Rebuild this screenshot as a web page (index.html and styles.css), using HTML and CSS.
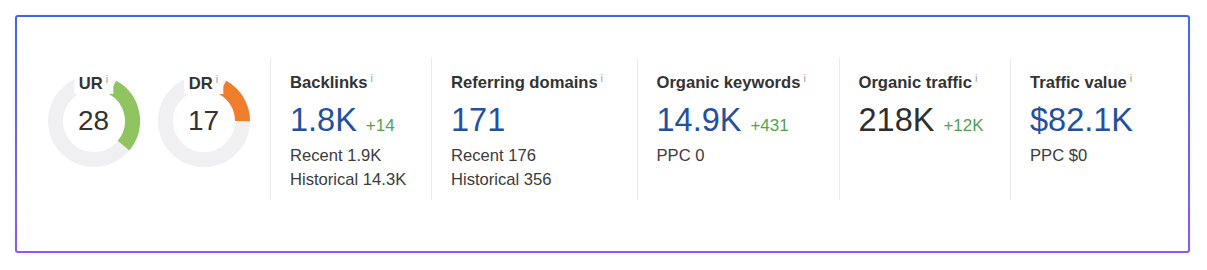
FILE: index.html
```html
<!DOCTYPE html>
<html lang="en">
<head>
<meta charset="utf-8">
<title>Overview</title>
<link rel="stylesheet" href="styles.css">
</head>
<body>
<div class="page">
  <div class="card">
    <div class="row">
      <div class="gauges">
        <div class="gauge">
          <svg class="ring" width="92" height="92" viewBox="0 0 92 92">
            <circle class="track" cx="46" cy="46" r="38.5"></circle>
            <path class="arc arc-ur" d="M64.67 12.33 A38.5 38.5 0 0 1 75.58 70.64"></path>
          </svg>
          <div class="gauge-label">UR<span class="info">i</span></div>
          <div class="gauge-value">28</div>
        </div>
        <div class="gauge">
          <svg class="ring" width="92" height="92" viewBox="0 0 92 92">
            <circle class="track" cx="46" cy="46" r="38.5"></circle>
            <path class="arc arc-dr" d="M64.67 12.33 A38.5 38.5 0 0 1 84.5 46.13"></path>
          </svg>
          <div class="gauge-label">DR<span class="info">i</span></div>
          <div class="gauge-value">17</div>
        </div>
      </div>

      <div class="metric">
        <div class="metric-label">Backlinks<span class="info">i</span></div>
        <div class="metric-main"><span class="big blue">1.8K</span><span class="delta">+14</span></div>
        <div class="metric-sub">
          <div>Recent 1.9K</div>
          <div>Historical 14.3K</div>
        </div>
      </div>

      <div class="metric">
        <div class="metric-label">Referring domains<span class="info">i</span></div>
        <div class="metric-main"><span class="big blue">171</span></div>
        <div class="metric-sub">
          <div>Recent 176</div>
          <div>Historical 356</div>
        </div>
      </div>

      <div class="metric">
        <div class="metric-label">Organic keywords<span class="info">i</span></div>
        <div class="metric-main"><span class="big blue">14.9K</span><span class="delta">+431</span></div>
        <div class="metric-sub">
          <div>PPC 0</div>
        </div>
      </div>

      <div class="metric">
        <div class="metric-label">Organic traffic<span class="info">i</span></div>
        <div class="metric-main"><span class="big dark">218K</span><span class="delta">+12K</span></div>
      </div>

      <div class="metric">
        <div class="metric-label">Traffic value<span class="info">i</span></div>
        <div class="metric-main"><span class="big blue">$82.1K</span></div>
        <div class="metric-sub">
          <div>PPC $0</div>
        </div>
      </div>
    </div>
  </div>
</div>
</body>
</html>
```

FILE: styles.css
```css
* {
  box-sizing: border-box;
}

html, body {
  margin: 0;
  padding: 0;
  background: #ffffff;
}

body {
  font-family: "Liberation Sans", Arial, sans-serif;
  color: #333333;
}

.page {
  padding: 15px 17px 17px 15px;
}

.card {
  width: 1175px;
  height: 238px;
  border: 2px solid transparent;
  border-radius: 3px;
  background:
    linear-gradient(#ffffff, #ffffff) padding-box,
    linear-gradient(180deg, #3f68e6 0%, #6a63e8 50%, #8a5ce8 100%) border-box;
  box-shadow: 0 0 5px rgba(0, 0, 0, 0.07);
  padding-top: 41px;
}

.row {
  display: grid;
  grid-template-columns: 253px 161px 205.5px 202px 171.5px 1fr;
  height: 142px;
}

.gauges {
  display: flex;
  gap: 18px;
  padding-left: 30.5px;
  padding-top: 17px;
}

.gauge {
  position: relative;
  width: 92px;
  height: 92px;
}

.ring {
  display: block;
}

.track {
  fill: none;
  stroke: #f0f0f3;
  stroke-width: 15;
}

.arc {
  fill: none;
  stroke-width: 15;
  stroke-linecap: butt;
}

.arc-ur {
  stroke: #8fc45f;
}

.arc-dr {
  stroke: #ef7d2b;
}

.gauge-label {
  position: absolute;
  top: -1.5px;
  left: 50%;
  transform: translateX(-50%);
  background: #ffffff;
  padding: 0 5px;
  font-size: 16.6px;
  font-weight: bold;
  line-height: 20px;
  white-space: nowrap;
  color: #333333;
}

.gauge-value {
  position: absolute;
  inset: 0;
  display: flex;
  align-items: center;
  justify-content: center;
  font-size: 28px;
  color: #333333;
}

.metric {
  border-left: 1px solid #ebebeb;
  padding: 15.4px 0 0 19px;
  white-space: nowrap;
}

.metric-label {
  font-size: 16.6px;
  font-weight: bold;
  line-height: 20px;
  color: #333333;
}

.info {
  font-size: 11px;
  font-weight: normal;
  line-height: 0;
  color: #a0a0a0;
  vertical-align: 6px;
  margin-left: 3px;
}

.metric-main {
  margin-top: 8.7px;
  line-height: 36px;
  height: 36px;
}

.big {
  font-size: 32.5px;
}

.blue {
  color: #24509d;
}

.dark {
  color: #2e2e2e;
}

.delta {
  font-size: 17px;
  color: #52a34d;
  margin-left: 9px;
}

.metric-sub {
  margin-top: 6px;
  font-size: 16.6px;
  line-height: 24px;
  color: #3c3c3c;
}
```
